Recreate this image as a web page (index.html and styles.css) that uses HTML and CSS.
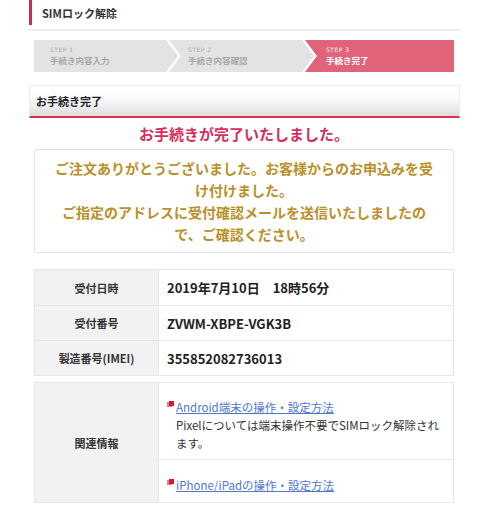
FILE: index.html
```html
<!DOCTYPE html>
<html lang="ja">
<head>
<meta charset="utf-8">
<title>SIMロック解除</title>
<link rel="stylesheet" href="styles.css">
</head>
<body>
<div class="page">
  <div class="title-wrap">
    <div class="title-bar">SIMロック解除</div>
  </div>

  <div class="steps">
    <div class="step step1"><span class="step-no">STEP 1</span><span class="step-name">手続き内容入力</span></div>
    <div class="step step2"><span class="step-no">STEP 2</span><span class="step-name">手続き内容確認</span></div>
    <div class="step step3"><span class="step-no">STEP 3</span><span class="step-name">手続き完了</span></div>
  </div>

  <div class="section-head">お手続き完了</div>

  <div class="inner">
    <h1 class="done">お手続きが完了いたしました。</h1>
    <div class="message">
      ご注文ありがとうございました。お客様からのお申込みを受け付けました。<br>
      ご指定のアドレスに受付確認メールを送信いたしましたので、ご確認ください。
    </div>

    <table class="info">
      <tr class="r1"><th>受付日時</th><td>2019年7月10日　18時56分</td></tr>
      <tr><th>受付番号</th><td>ZVWM-XBPE-VGK3B</td></tr>
      <tr><th>製造番号(IMEI)</th><td>355852082736013</td></tr>
    </table>

    <table class="related">
      <tr class="rel1">
        <th rowspan="2">関連情報</th>
        <td>
          <a class="link" href="#"><svg class="ico" width="8" height="7" viewBox="0 0 8 7"><rect x="0" y="1" width="5" height="5" fill="#ef7a86"/><rect x="2" y="0" width="5" height="5" fill="#d3182f"/></svg><span>Android端末の操作・設定方法</span></a>
          <p class="desc">Pixelについては端末操作不要でSIMロック解除されます。</p>
        </td>
      </tr>
      <tr class="rel2">
        <td>
          <a class="link" href="#"><svg class="ico" width="8" height="7" viewBox="0 0 8 7"><rect x="0" y="1" width="5" height="5" fill="#ef7a86"/><rect x="2" y="0" width="5" height="5" fill="#d3182f"/></svg><span>iPhone/iPadの操作・設定方法</span></a>
        </td>
      </tr>
    </table>
  </div>
</div>
</body>
</html>
```

FILE: styles.css
```css
html, body {
  margin: 0;
  padding: 0;
  background: #fff;
}
body {
  font-family: "Noto Sans CJK JP", "Noto Sans", sans-serif;
  color: #333;
}
.page {
  width: 431px;
  margin-left: 29px;
}
.title-wrap {
  border-bottom: 2px solid #ececec;
  padding-bottom: 4px;
}
.title-bar {
  height: 25px;
  line-height: 26px;
  border-left: 3px solid #cf2e48;
  padding-left: 10px;
  font-size: 11px;
  font-weight: bold;
  color: #333;
}
.steps {
  display: flex;
  margin: 9px 6px 0 5px;
  height: 32px;
}
.step {
  height: 32px;
  display: flex;
  flex-direction: column;
  justify-content: center;
  background: #e3e3e3;
  color: #a8a8a8;
  box-sizing: border-box;
}
.step-no {
  font-size: 6px;
  line-height: 8px;
  letter-spacing: 0.5px;
  font-family: "DejaVu Sans", sans-serif;
}
.step-name {
  font-size: 8.5px;
  line-height: 12px;
  font-weight: bold;
}
.step1 {
  width: 144px;
  padding-left: 16px;
  clip-path: polygon(0 0, calc(100% - 12px) 0, 100% 50%, calc(100% - 12px) 100%, 0 100%);
}
.step2 {
  width: 145px;
  margin-left: -9px;
  padding-left: 19px;
  clip-path: polygon(0 0, calc(100% - 12px) 0, 100% 50%, calc(100% - 12px) 100%, 0 100%, 12px 50%);
}
.step3 {
  flex: 1;
  margin-left: -9px;
  padding-left: 21px;
  background: #e0637a;
  color: #fff;
  clip-path: polygon(0 0, 100% 0, 100% 100%, 0 100%, 12px 50%);
}
.section-head {
  margin-top: 13px;
  height: 30px;
  line-height: 30px;
  padding-left: 6px;
  border: 1px solid #ececec;
  border-bottom: 2px solid #d8304f;
  border-top-color: #f0f0f0;
  background: linear-gradient(#ffffff 0%, #fbfbfb 40%, #dedede 100%);
  font-size: 11px;
  font-weight: bold;
  color: #222;
}
.inner {
  margin: 0 6px 0 5px;
}
.done {
  margin: 0;
  height: 31px;
  line-height: 32px;
  text-align: center;
  font-size: 15px;
  font-weight: bold;
  color: #d42f5c;
}
.message {
  border: 1px solid #e3e3e3;
  border-radius: 2px;
  padding: 7px 16px 7px;
  text-align: center;
  font-size: 14px;
  line-height: 22px;
  font-weight: bold;
  color: #b9902a;
}
table {
  width: 100%;
  border-collapse: collapse;
}
.info {
  margin-top: 16px;
}
th, td {
  border: 1px solid #e6e6e6;
}
th {
  width: 123px;
  background: #f2f2f2;
  font-size: 11px;
  font-weight: bold;
  color: #333;
  text-align: center;
  padding: 0;
}
.info td {
  height: 34px;
  padding: 0 8px;
  font-size: 13px;
  font-weight: bold;
  color: #222;
}
.info .r1 td, .info .r1 th {
  height: 35px;
}
.related {
  margin-top: 6px;
}
.related td {
  padding: 0 10px 0 8px;
  font-size: 11.5px;
  line-height: 18px;
  vertical-align: top;
}
.rel1 td {
  padding-top: 15px;
  padding-bottom: 7px;
}
.rel2 td {
  padding-top: 16px;
  padding-bottom: 8px;
}
.link {
  color: #5077cf;
  text-decoration: none;
}
.link span {
  text-decoration: underline;
}
.ico {
  vertical-align: top;
  margin-top: 3px;
  margin-right: 1px;
}
.desc {
  margin: 0;
  padding-left: 9px;
  color: #333;
}
```
